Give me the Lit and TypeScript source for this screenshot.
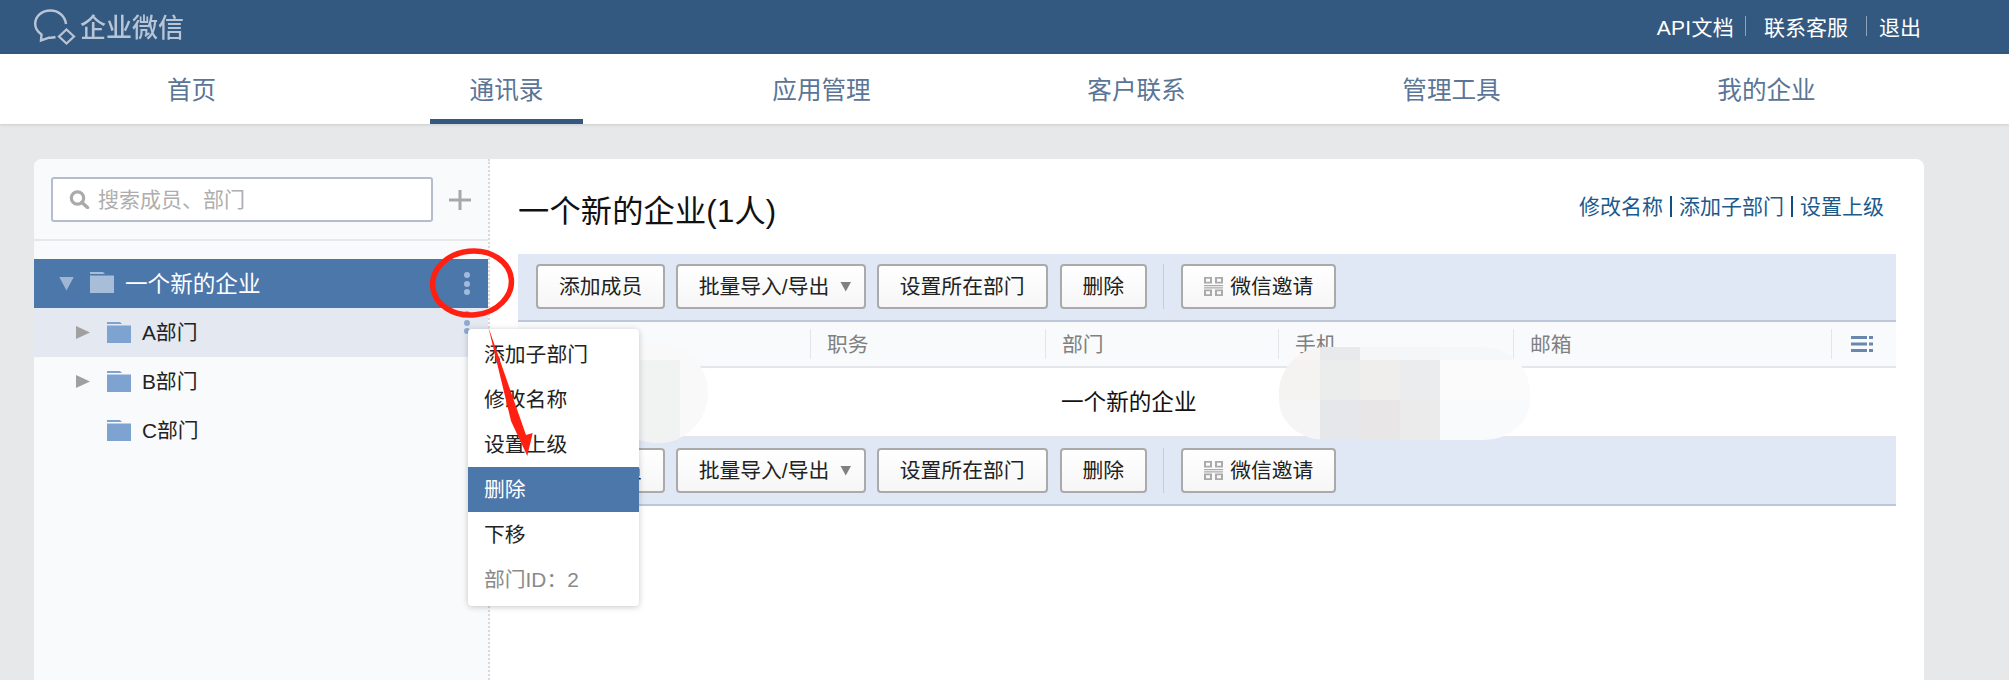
import { LitElement, html, css, svg } from "lit";
import { customElement } from "lit/decorators.js";

const NAV = ["首页", "通讯录", "应用管理", "客户联系", "管理工具", "我的企业"];
const COLS = ["", "职务", "部门", "手机", "邮箱"];
const MENU = ["添加子部门", "修改名称", "设置上级", "删除", "下移"];
const TREE = [
  { name: "A部门", arrow: true, dots: true, hover: true },
  { name: "B部门", arrow: true },
  { name: "C部门", arrow: false },
];
const MOSAIC = [
  "#f6f5f4", "#e8e9eb", "#f5f6f8", "#f5f6f8", "#f6f7f9",
  "#f5f3f1", "#ebecec", "#efeeec", "#ebecee", "#fbfbfc",
  "#f5f5f5", "#e5e7ea", "#e8e6e6", "#ebebeb", "#f9fafc",
];

const folder = (cls: string) => html`<svg class="folder ${cls}" viewBox="0 0 24 21" aria-hidden="true">
  <path d="M0 0H13L15 2H0Z"></path><path d="M0 3.5H24V21H0Z"></path>
</svg>`;

const qr = html`<svg class="qr" viewBox="0 0 19 19" aria-hidden="true">
  <path fill-rule="evenodd" d="M0 0H8V6.5H0ZM2 1.7V4.8H6V1.7ZM11 0H19V6.5H11ZM13 1.7V4.8H17V1.7ZM0 12.5H8V19H0ZM2 14.2V17.3H6V14.2ZM11 12.5H19V19H11ZM13 14.2V17.3H17V14.2Z"></path>
  <path d="M0 8H19V9.3H0ZM0 10.2H19V11.5H0Z"></path>
</svg>`;

@customElement("app-root")
export class AppRoot extends LitElement {
  static styles = css`
    :host {
      display: block;
      position: relative;
      width: 2009px;
      height: 680px;
      overflow: hidden;
      background: #e7e8ea;
      font-family: "Liberation Sans", "Noto Sans CJK SC", sans-serif;
      color: #222;
    }
    .top {
      height: 54px;
      background: #345981;
      display: flex;
      align-items: center;
      padding: 0 88px 0 34px;
      color: #fff;
      font-size: 21px;
    }
    .logo { display: flex; align-items: center; }
    .logo svg { width: 42px; height: 36px; }
    .logo span {
      margin-left: 4px;
      padding-bottom: 3px;
      font-size: 26px;
      font-weight: 500;
      color: #b7c5d6;
      filter: blur(0.4px);
    }
    .toplinks { margin-left: auto; display: flex; align-items: center; padding-bottom: 3px; }
    .toplinks i { width: 1px; height: 20px; background: #8ea2ba; margin-top: 4px; }
    .toplinks .api { letter-spacing: 0.3px; }
    .toplinks .s1 { margin: 0 18px 0 11px; }
    .toplinks .s2 { margin: 0 12px 0 18px; }
    .nav {
      height: 70px;
      background: #fff;
      display: flex;
      padding-left: 34px;
      box-shadow: 0 1px 3px rgba(0, 0, 0, 0.12);
      position: relative;
    }
    .nav a {
      width: 315px;
      font-size: 24.6px;
      color: #5a7596;
      display: flex;
      align-items: center;
      justify-content: center;
      position: relative;
      padding-bottom: 3px;
      box-sizing: border-box;
    }
    .nav a.on::after {
      content: "";
      position: absolute;
      left: 81px;
      width: 153px;
      bottom: 0;
      height: 5px;
      background: #345981;
    }
    .main { padding: 35px 85px 0 34px; }
    .card {
      position: relative;
      height: 521px;
      display: flex;
      background: #fff;
      border-radius: 8px 8px 0 0;
    }
    .side {
      width: 456px;
      box-sizing: border-box;
      flex: none;
      background: #f9fafc;
      border-right: 2px dotted #d6d9de;
      border-top-left-radius: 8px;
    }
    .sidehead {
      border-bottom: 2px solid #e6e8ec;
      display: flex;
      align-items: flex-start;
      padding: 18px 0 0 17px;
      box-sizing: border-box;
      height: 82px;
    }
    .search {
      width: 382px;
      height: 45px;
      box-sizing: border-box;
      border: 2px solid #b5bdcc;
      border-radius: 3px;
      background: #fff;
      display: flex;
      align-items: center;
      padding: 0 0 0 16px;
      gap: 8px;
      font-size: 21px;
      color: #aeaeae;
    }
    .search span { padding-bottom: 3px; }
    .search svg { width: 21px; height: 19px; flex: none; }
    .plus { width: 22px; height: 20px; margin: 13px 0 0 16px; }
    .tree { padding-top: 18px; }
    .row {
      height: 49px;
      display: flex;
      align-items: center;
      padding-left: 42px;
      font-size: 20.8px;
      width: 454px;
      box-sizing: border-box;
    }
    .row .name { padding-bottom: 3px; }
    .row.root {
      padding-left: 25px;
      background: #4c77aa;
      color: #fff;
      font-size: 22.6px;
    }
    .row.root .name { padding-bottom: 2px; }
    .row.hover { background: #e4e8f0; }
    .tri { width: 14px; height: 13px; flex: none; margin-right: 17px; background: #a0a0a0; clip-path: polygon(0 0, 100% 50%, 0 100%); }
    .tri.none { visibility: hidden; }
    .tri.down { width: 15px; height: 14px; margin-right: 16px; background: #9fb5d1; clip-path: polygon(0 0, 100% 0, 50% 100%); }
    .folder { width: 24px; height: 21px; flex: none; margin-right: 11px; fill: #7fa3d1; }
    .folder.light { fill: #a8bdd8; margin-top: -3px; }
    .dots { margin-left: auto; margin-right: 18px; display: flex; flex-direction: column; gap: 2.6px; }
    .dots b { width: 6px; height: 6px; border-radius: 50%; background: #8eaad0; }
    .root .dots b { background: #a2badb; }
    .hover .dots { margin-top: -20px; }
    .content { flex: 1; padding: 0 28px; min-width: 0; }
    .title {
      height: 95px;
      display: flex;
      justify-content: space-between;
      align-items: center;
      font-size: 31.2px;
      color: #111;
    }
    .title > span:first-child { letter-spacing: 0.2px; padding-top: 3px; }
    .links { font-size: 21px; color: #1c5a8c; margin: -3px 12px 0 0; display: flex; align-items: center; }
    .links i { width: 2px; height: 21px; margin: 2px 7px 0; background: #0f4f83; }
    .bar {
      background: #dfe8f4;
      border-bottom: 2px solid #bcc8d9;
      display: flex;
      align-items: flex-start;
      padding: 10px 0 0 18px;
      height: 56px;
      gap: 10.5px;
    }
    .bar.lower { border-top: 2px solid #e4e6ea; }
    .btn {
      height: 45px;
      box-sizing: border-box;
      border: 2px solid #aaa;
      border-radius: 4px;
      background: linear-gradient(#fff, #f6f6f6);
      display: flex;
      align-items: center;
      padding: 0 21px 3px;
      font-size: 20.8px;
      color: #222;
      white-space: nowrap;
    }
    .btn.del { margin-left: 1.5px; }
    .btn .caret { width: 11px; height: 10px; margin: 3px -8px 0 11px; background: #808080; clip-path: polygon(0 0, 100% 0, 50% 100%); }
    .sep { width: 1px; height: 45px; background: #c4cedb; margin: 0 6.5px 0 5.5px; }
    .qr { width: 19px; height: 19px; margin: 3px 7px 0 0; fill: #aaa; }
    .thead {
      height: 44px;
      background: #f9fafc;
      border-bottom: 2px solid #e4e6ea;
      display: grid;
      grid-template-columns: 292px 235px 233px 235px 318px 65px;
      align-items: center;
      font-size: 20.8px;
      color: #808080;
    }
    .th {
      height: 30px;
      display: flex;
      align-items: center;
      padding: 0 0 2px 16px;
      box-sizing: border-box;
    }
    .th + .th { border-left: 1px solid #e2e5ea; }
    .th svg { width: 22px; height: 16px; margin: 2px 0 0 3px; }
    .tr {
      height: 68px;
      background: #fff;
      display: grid;
      grid-template-columns: 527px 1fr;
      align-items: center;
      font-size: 22.6px;
      color: #111;
    }
    .tr span { grid-column: 2; padding: 0 0 3px 16px; }
    .menu {
      position: absolute;
      left: 434px;
      top: 170px;
      width: 171px;
      height: 277px;
      box-sizing: border-box;
      padding: 3px 0 4px;
      background: #fff;
      border-radius: 4px;
      box-shadow: 0 1px 6px rgba(0, 0, 0, 0.22);
      font-size: 20.8px;
      color: #222;
      z-index: 3;
    }
    .menu div { height: 45px; box-sizing: border-box; display: flex; align-items: center; padding: 0 0 3px 16px; }
    .menu .act { background: #4c77aa; color: #fff; }
    .menu .id { color: #8a8a8a; }
    .patch { position: absolute; z-index: 2; overflow: hidden; }
    .p1 {
      left: 574px;
      top: 184px;
      width: 100px;
      height: 100px;
      border-radius: 50%;
      background: #f9f9fa;
    }
    .p1 span { position: absolute; left: 32px; top: 17px; width: 40px; height: 83px; background: #f1f2f2; }
    .p2 {
      left: 1245px;
      top: 188px;
      width: 251px;
      height: 93px;
      border-radius: 46px 46px 46px 46px / 46px 46px 40px 40px;
      display: grid;
      grid-template-columns: 41px 40px 40px 40px 90px;
      grid-template-rows: 13px 40px 40px;
    }
    .notes { position: absolute; left: 0; top: 0; width: 2009px; height: 680px; z-index: 5; pointer-events: none; }
  `;

  render() {
    return html`
      <div class="top">
        <div class="logo">
          <svg viewBox="0 0 42 36" fill="none" stroke="#b7c5d6" stroke-width="2.4" aria-hidden="true">
            <path d="M21.500 28C20 28.500 18 28.800 15 28.700L7 31.500L7.500 25.500C3 22.500 1.200 19 1.200 14.800C1.200 7 8 1.500 16.500 1.500C24.500 1.500 31 7 32 15"></path>
            <path d="M32.500 20.500L40 27.500L32.500 34.500L25 27.500Z" stroke-width="2.200"></path>
          </svg>
          <span>企业微信</span>
        </div>
        <div class="toplinks">
          <span class="api">API文档</span><i class="s1"></i><span>联系客服</span><i class="s2"></i><span>退出</span>
        </div>
      </div>
      <div class="nav">
        ${NAV.map((n, i) => html`<a class=${i === 1 ? "on" : ""}>${n}</a>`)}
      </div>
      <div class="main">
        <div class="card">
          <div class="side">
            <div class="sidehead">
              <div class="search">
                <svg viewBox="0 0 21 19" aria-hidden="true">
                  <circle cx="8.500" cy="8" r="6.200" fill="none" stroke="#aaa" stroke-width="3.200"></circle>
                  <path d="M13 12.500L18.500 17.500" stroke="#aaa" stroke-width="3.400" stroke-linecap="round"></path>
                </svg>
                <span>搜索成员、部门</span>
              </div>
              <svg class="plus" viewBox="0 0 22 20" aria-hidden="true"><path d="M0 8.500H22V11.500H0ZM9.500 0H12.500V20H9.500Z" fill="#a8a8a8"></path></svg>
            </div>
            <div class="tree">
              <div class="row root">
                <span class="tri down"></span>
                ${folder("light")}
                <span class="name">一个新的企业</span>
                <span class="dots"><b></b><b></b><b></b></span>
              </div>
              ${TREE.map(
                (t) => html`<div class="row ${t.hover ? "hover" : ""}">
                  <span class="tri ${t.arrow ? "" : "none"}"></span>
                  ${folder("")}
                  <span class="name">${t.name}</span>
                  ${t.dots ? html`<span class="dots"><b></b><b></b><b></b></span>` : ""}
                </div>`
              )}
            </div>
          </div>
          <div class="content">
            <div class="title">
              <span>一个新的企业(1人)</span>
              <span class="links">修改名称<i></i>添加子部门<i></i>设置上级</span>
            </div>
            ${this.bar("")}
            <div class="thead">
              ${COLS.map((c) => html`<div class="th">${c}</div>`)}
              <div class="th">
                <svg viewBox="0 0 22 16" aria-hidden="true" fill="#6a88ad">
                  <path d="M0 0H16V3H0ZM18 0H22V3H18ZM0 6.500H16V9.500H0ZM18 6.500H22V9.500H18ZM0 13H16V16H0ZM18 13H22V16H18Z"></path>
                </svg>
              </div>
            </div>
            <div class="tr"><span>一个新的企业</span></div>
            ${this.bar("lower")}
          </div>
          <div class="patch p1"><span></span></div>
          <div class="patch p2">
            ${MOSAIC.map((c) => html`<span style="background:${c}"></span>`)}
          </div>
          <div class="menu">
            ${MENU.map((m) => html`<div class=${m === "删除" ? "act" : ""}>${m}</div>`)}
            <div class="id">部门ID：2</div>
          </div>
        </div>
      </div>
      <svg class="notes" viewBox="0 0 2009 680" aria-hidden="true">
        ${svg`<ellipse cx="472" cy="283" rx="39.500" ry="32" fill="none" stroke="#ff2012" stroke-width="5.500" transform="rotate(-6 472 283)"></ellipse>
        <path d="M488.300 327L526 435L532.700 433L527.300 456L511 421Z" fill="#ff2012"></path>`}
      </svg>
    `;
  }

  bar(cls: string) {
    return html`<div class="bar ${cls}">
      <div class="btn">添加成员</div>
      <div class="btn">批量导入/导出<span class="caret"></span></div>
      <div class="btn">设置所在部门</div>
      <div class="btn del">删除</div>
      <div class="sep"></div>
      <div class="btn">${qr}微信邀请</div>
    </div>`;
  }
}
